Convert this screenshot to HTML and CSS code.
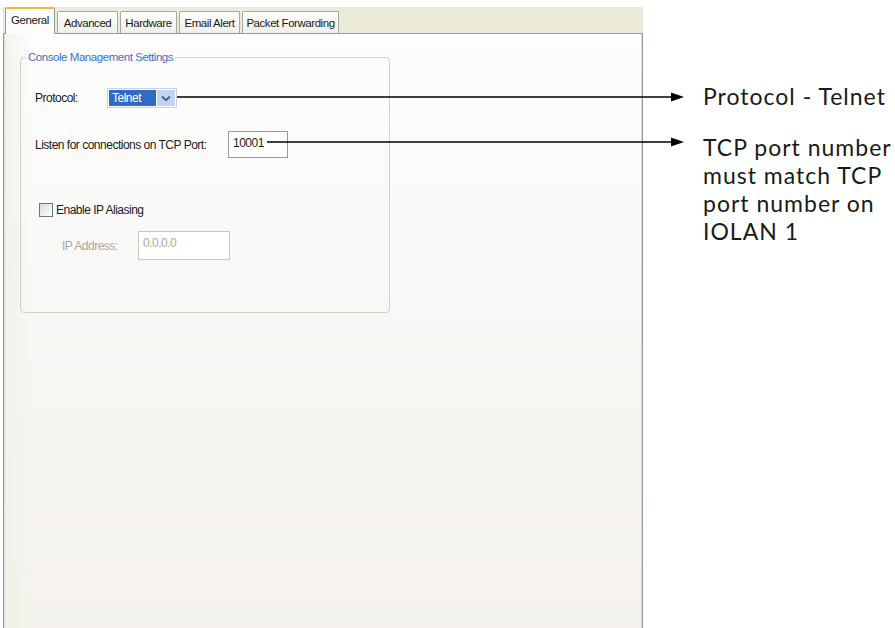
FILE: index.html
```html
<!DOCTYPE html>
<html>
<head>
<meta charset="utf-8">
<title>Console Management Settings</title>
<link rel="stylesheet" href="styles.css">
</head>
<body>
<div class="page">
  <div class="dialog">
    <div class="tabs">
      <div class="tab tab-active">General</div>
      <div class="tab tab-advanced">Advanced</div>
      <div class="tab tab-hardware">Hardware</div>
      <div class="tab tab-email">Email Alert</div>
      <div class="tab tab-packet">Packet Forwarding</div>
    </div>
    <div class="panel">
      <div class="group">
        <span class="legend">Console Management Settings</span>
        <div class="row row-protocol">
          <span class="label label-protocol">Protocol:</span>
          <div class="select">
            <span class="select-value">Telnet</span>
            <span class="select-btn">
              <svg width="10" height="7" viewBox="0 0 10 7"><path d="M1 1.5 L5 5.2 L9 1.5" fill="none" stroke="#4d6185" stroke-width="2"/></svg>
            </span>
          </div>
        </div>
        <div class="row row-port">
          <span class="label label-port">Listen for connections on TCP Port:</span>
          <div class="input">10001</div>
        </div>
        <div class="row row-alias">
          <span class="checkbox"></span>
          <span class="label">Enable IP Aliasing</span>
        </div>
        <div class="row row-ip">
          <span class="label label-ip">IP Address:</span>
          <div class="input input-disabled">0.0.0.0</div>
        </div>
      </div>
    </div>
  </div>
  <div class="notes">
    <div class="note note-protocol">Protocol - Telnet</div>
    <div class="note note-port">TCP port number<br>must match TCP<br>port number on<br>IOLAN 1</div>
  </div>
  <svg class="callouts" width="895" height="628" viewBox="0 0 895 628">
    <line x1="177" y1="97" x2="674" y2="97" stroke="#000" stroke-width="1.5"/>
    <polygon points="671,92.5 684,97 671,101.5" fill="#000"/>
    <line x1="267" y1="142" x2="674" y2="142" stroke="#000" stroke-width="1.5"/>
    <polygon points="671,137.5 684,142 671,146.5" fill="#000"/>
  </svg>
</div>
</body>
</html>
```

FILE: styles.css
```css
html, body {
  margin: 0;
  padding: 0;
  background: #ffffff;
}

.page {
  position: relative;
  display: flex;
  width: 895px;
  height: 628px;
  overflow: hidden;
  font-family: "Liberation Sans", Arial, sans-serif;
}

.dialog {
  width: 643px;
  flex: none;
  display: flex;
  flex-direction: column;
  padding-top: 7px;
  box-sizing: border-box;
}

.tabs {
  height: 26px;
  margin-left: 3px;
  padding-left: 2px;
  background: #ecebd9;
  display: flex;
  align-items: flex-end;
  gap: 2px;
  flex: none;
}

.tab {
  box-sizing: border-box;
  height: 22px;
  border: 1px solid #a4a8a2;
  border-bottom: none;
  border-radius: 2px 2px 0 0;
  background: linear-gradient(#ffffff, #f0efe8);
  font-size: 11.5px;
  letter-spacing: -0.45px;
  color: #1b1b1b;
  display: flex;
  align-items: center;
  justify-content: center;
}

.tab-active {
  width: 50px;
  height: 27px;
  margin-bottom: -1px;
  position: relative;
  z-index: 1;
  background: #fcfcfd;
  border-color: #919b9c;
  border-top: 2px solid #efb44a;
  padding-bottom: 3px;
}

.tab-advanced { width: 61px; }
.tab-hardware { width: 57px; }
.tab-email { width: 61px; }
.tab-packet { width: 97px; }

.panel {
  flex: none;
  height: 610px;
  margin-left: 3px;
  border: 1px solid #919b9c;
  box-shadow: inset 1px 0 #dcdcd4, inset -1px 0 #dcdcd4;
  background:
    linear-gradient(90deg, rgba(236, 240, 226, 0.7), rgba(236, 240, 226, 0) 28px),
    linear-gradient(#fdfdfd, #f9f8f6 40%, #f4f1ec);
  padding: 23px 0 0 16px;
}

.group {
  position: relative;
  box-sizing: border-box;
  width: 370px;
  height: 256px;
  border: 1px solid #d3d3c6;
  border-radius: 4px;
  padding: 30px 0 0 14px;
  display: flex;
  flex-direction: column;
  font-size: 12px;
  letter-spacing: -0.5px;
  color: #1b1b1b;
}

.legend {
  position: absolute;
  top: -7px;
  left: 5px;
  padding: 0 2px;
  background: #fcfcfc;
  color: #3d6fcf;
  font-size: 11.5px;
  letter-spacing: -0.45px;
  line-height: 13px;
}

.row {
  display: flex;
  align-items: center;
}

.row-protocol { height: 20px; }
.label-protocol { width: 72px; }

.select {
  box-sizing: border-box;
  width: 70px;
  height: 20px;
  border: 1px solid #c4d2ee;
  padding: 1px;
  display: flex;
  background: #ffffff;
}

.select-value {
  flex: 1;
  background: #316ac5;
  color: #ffffff;
  padding-left: 3px;
  display: flex;
  align-items: center;
}

.select-btn {
  width: 18px;
  margin-left: 1px;
  background: #c3d4f7;
  display: flex;
  align-items: center;
  justify-content: center;
}

.row-port {
  height: 27px;
  margin-top: 23px;
}

.label-port { width: 193px; }

.input {
  box-sizing: border-box;
  width: 60px;
  height: 27px;
  border: 1px solid #8a9cb2;
  background: #ffffff;
  padding: 0 0 0 4px;
  display: flex;
  align-items: center;
  padding-bottom: 4px;
}

.row-alias {
  height: 14px;
  margin-top: 45px;
  padding-left: 4px;
}

.checkbox {
  box-sizing: border-box;
  width: 14px;
  height: 14px;
  border: 1px solid #5d7891;
  background: linear-gradient(135deg, #dcdcd6, #ffffff);
  margin-right: 3px;
}

.row-ip {
  height: 29px;
  margin-top: 14px;
  padding-left: 27px;
}

.label-ip {
  width: 76px;
  color: #aca899;
}

.input-disabled {
  width: 92px;
  height: 29px;
  border-color: #cbc9bc;
  color: #aca899;
  padding-bottom: 6px;
}

.notes {
  margin-left: 60px;
  padding-top: 82px;
  font-family: Lato, "Open Sans", sans-serif;
  font-size: 23px;
  letter-spacing: 1px;
  line-height: 28px;
  color: #1a1a1a;
  white-space: nowrap;
}

.note-port {
  margin-top: 23px;
}

.callouts {
  position: absolute;
  top: 0;
  left: 0;
  pointer-events: none;
}
```
